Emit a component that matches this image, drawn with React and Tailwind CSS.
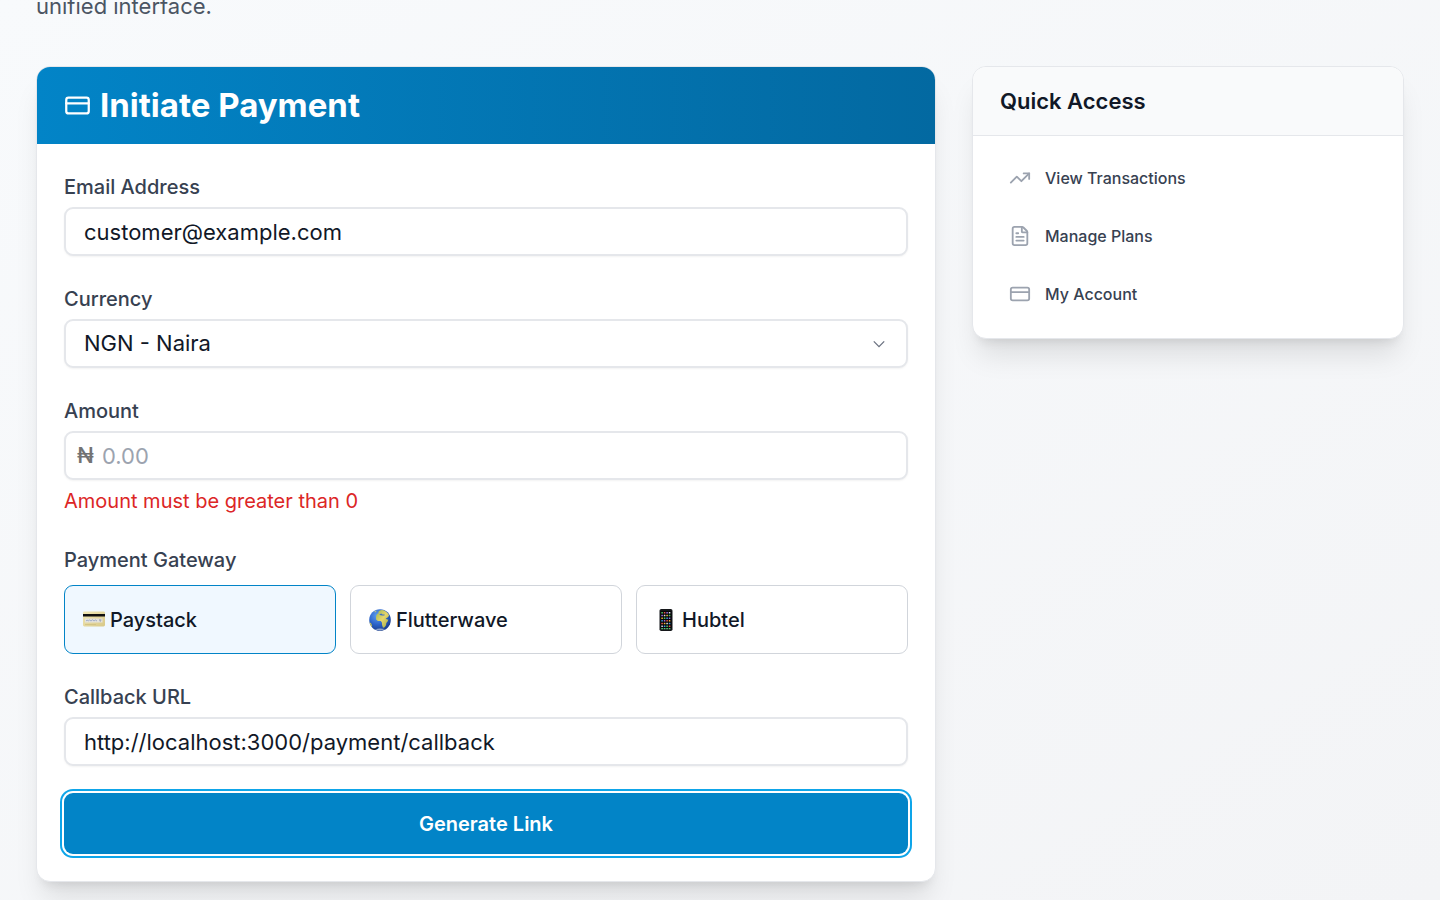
import { useState } from 'react';
import { CreditCard, FileText, TrendingUp } from 'lucide-react';
import clsx from 'clsx';

const CARD =
  'overflow-hidden rounded-[14px] border border-[#e5e7eb] bg-white shadow-[0_22px_28px_-6px_rgb(0_0_0/0.1),0_9px_11px_-7px_rgb(0_0_0/0.1)]';

const FIELD =
  'block h-[49px] w-full rounded-[9px] border-2 border-[#e5e7eb] bg-white px-[18px] text-[22px] text-[#111827] shadow-xs outline-0 placeholder:text-[#9ca3af] focus:border-[#0ea5e9]';

const LABEL = 'block text-[20px] leading-8 font-medium text-[#374151]';

const PaystackIcon = () => (
  <svg viewBox="0 0 22 22" className="size-[22px] shrink-0" aria-hidden="true">
    <defs>
      <linearGradient id="card-face" x1="0" y1="0" x2="1" y2="1">
        <stop offset="0" stopColor="#f1e8b6" />
        <stop offset="1" stopColor="#d8c887" />
      </linearGradient>
    </defs>
    <rect x="0" y="2.500" width="22" height="15" rx="1.400" fill="url(#card-face)" />
    <rect x="0" y="5" width="22" height="2.500" fill="#111111" />
    <rect x="2" y="9.500" width="17.500" height="4" fill="#e4e2dc" />
    <path d="M3 12l1.200-1 1 1 1.400-1 1.400 1 1.600-1.200 1.400 1.200 1.400-1 1.600 1" stroke="#8fa0c4" strokeWidth=".8" fill="none" />
    <path d="M16 11h2.400M16.800 12.100h1" stroke="#7b83a0" strokeWidth=".8" />
    <path d="M2 15.500h11" stroke="#cdbd7c" strokeWidth=".7" />
  </svg>
);

const FlutterwaveIcon = () => (
  <svg viewBox="0 0 22 22" className="size-[22px] shrink-0" aria-hidden="true">
    <defs>
      <radialGradient id="ocean" cx=".38" cy=".3" r=".75">
        <stop offset="0" stopColor="#5fa0f0" />
        <stop offset=".55" stopColor="#2c63c9" />
        <stop offset="1" stopColor="#173a86" />
      </radialGradient>
      <linearGradient id="land" x1="0" y1="0" x2="1" y2="1">
        <stop offset="0" stopColor="#9db552" />
        <stop offset=".5" stopColor="#e6d66c" />
        <stop offset="1" stopColor="#9aa944" />
      </linearGradient>
    </defs>
    <circle cx="11" cy="11" r="10.800" fill="url(#ocean)" />
    <path
      d="M7.400 6.300l1-1.500 1.200-.4-.3-1.400 1.400-1.400 2.200-.6c2.300.3 4.200 1.400 5.700 3l1.500 2.300-.9 1.800-1.500 1-1 .2 1.300 1.300 1.300-.2-.7 2.100-1.300 1.500-.3 2.200-1.400 2-1.600.5-.9-2.600-.2-2.700-1.100-1.400-2.900.1-1.800-1.700-.1-2.300z"
      fill="url(#land)"
    />
    <path d="M10.500 5.200l1.800-.6 1.200.9 2.200.1-.3 1-2.300-.1-2.300-.6z" fill="#3a70c8" />
    <path d="M.5 13.200l1.600 1 .9 2.300-.2 1.500A10.800 10.800 0 0 1 .5 13.200z" fill="#c9c257" />
    <path d="M5.500 2.300l2-.7-.4 1.300-1.400.6z" fill="#b8c58a" />
    <path d="M6 20.200c3.300 1.500 7 1.400 10-.1-2.900-.8-7-.8-10 .1z" fill="#dfe7f2" opacity=".6" />
  </svg>
);

const APP_COLORS = ['#4cc764', '#d9dde2', '#e8574d', '#3f9be8', '#f0b53a', '#9a6be0'];

const HubtelIcon = () => (
  <svg viewBox="0 0 22 22" className="size-[22px] shrink-0" aria-hidden="true">
    <rect x="4.500" y="0" width="13" height="22" rx="1.800" fill="#15171a" />
    <rect x="5.500" y="2" width="11" height="17.500" fill="#050608" />
    {[0, 1, 2, 3, 4, 5].map((row) =>
      [0, 1, 2, 3].map((col) => (
        <rect
          key={`${row}-${col}`}
          x={6.3 + col * 2.5}
          y={3 + row * 2.7}
          width="1.600"
          height="1.500"
          rx=".3"
          fill={APP_COLORS[(row * 5 + col * 2 + (col > 1 ? 1 : 0)) % 6]}
        />
      ))
    )}
    <path d="M6.300 19.600h9.300" stroke="#58c878" strokeWidth="1.200" strokeDasharray="1.600 .9" />
  </svg>
);

const gateways = [
  { id: 'paystack', name: 'Paystack', icon: PaystackIcon },
  { id: 'flutterwave', name: 'Flutterwave', icon: FlutterwaveIcon },
  { id: 'hubtel', name: 'Hubtel', icon: HubtelIcon }
];

const quickLinks = [
  { label: 'View Transactions', href: '#transactions', icon: TrendingUp },
  { label: 'Manage Plans', href: '#plans', icon: FileText },
  { label: 'My Account', href: '#account', icon: CreditCard }
];

const PaymentForm = () => {
  const [formData, setFormData] = useState({
    email: 'customer@example.com',
    currency: 'NGN',
    amount: '',
    gateway: 'paystack',
    callbackUrl: 'http://localhost:3000/payment/callback'
  });

  const setField = (field) => (e) => setFormData(prev => ({ ...prev, [field]: e.target.value }));

  return (
    <section className={clsx(CARD, 'lg:col-span-2')}>
      <div className="flex items-center gap-[9px] bg-linear-to-r from-[#0284c7] to-[#0369a1] px-[27px] py-[18px] text-white">
        <CreditCard className="size-[27px]" />
        <h2 className="text-[33px] leading-[41px] font-bold">Initiate Payment</h2>
      </div>

      <form className="space-y-[27px] p-[27px]" onSubmit={(e) => e.preventDefault()}>
        <div>
          <label htmlFor="email" className={LABEL}>Email Address</label>
          <input id="email" type="email" value={formData.email} onChange={setField('email')} className={clsx(FIELD, 'mt-1')} />
        </div>

        <div>
          <label htmlFor="currency" className={LABEL}>Currency</label>
          <div className="relative mt-1">
            <select id="currency" value={formData.currency} onChange={setField('currency')} className={clsx(FIELD, 'appearance-none')}>
              <option value="NGN">NGN - Naira</option>
              <option value="GHS">GHS - Cedi</option>
              <option value="USD">USD - Dollar</option>
            </select>
            <svg viewBox="0 0 20 20" className="pointer-events-none absolute inset-y-0 right-4 my-auto size-[26px]" fill="none" stroke="#6b7280" strokeWidth="1" aria-hidden="true">
              <path d="M6 8l4 4 4-4" />
            </svg>
          </div>
        </div>

        <div>
          <label htmlFor="amount" className={LABEL}>Amount</label>
          <div className="relative mt-1">
            <span className="pointer-events-none absolute inset-y-0 left-[13px] flex items-center text-[22px] font-medium text-[#737373]">₦</span>
            <input id="amount" type="text" inputMode="decimal" placeholder="0.00" value={formData.amount} onChange={setField('amount')} className={clsx(FIELD, 'pl-9')} />
          </div>
          <p className="mt-[5px] text-[20px] leading-8 text-[#dc2626]">Amount must be greater than 0</p>
        </div>

        <fieldset>
          <legend className={LABEL}>Payment Gateway</legend>
          <div className="mt-[9px] grid grid-cols-3 gap-[14px]">
            {gateways.map(({ id, name, icon: Icon }) => (
              <label
                key={id}
                className={clsx(
                  'flex h-[69px] cursor-pointer items-center gap-[5px] rounded-[9px] border px-[18px] text-[20px] font-medium text-[#111827]',
                  formData.gateway === id ? 'border-[#0284c7] bg-[#f0f8ff]' : 'border-[#d1d5db] bg-white'
                )}
              >
                <input type="radio" name="gateway" value={id} checked={formData.gateway === id} onChange={setField('gateway')} className="sr-only" />
                <Icon />
                {name}
              </label>
            ))}
          </div>
        </fieldset>

        <div>
          <label htmlFor="callback" className={LABEL}>Callback URL</label>
          <input id="callback" type="url" value={formData.callbackUrl} onChange={setField('callbackUrl')} className={clsx(FIELD, 'mt-1')} />
        </div>

        <button type="submit" className="block h-[61px] w-full rounded-[9px] bg-[#0284c7] text-[20px] font-semibold text-white ring-2 ring-[#0ea5e9] ring-offset-2 outline-0">
          Generate Link
        </button>
      </form>
    </section>
  );
};

const QuickAccess = () => (
  <aside className={CARD}>
    <h3 className="border-b border-[#e5e7eb] bg-[#f9fafb] px-[27px] py-[18px] text-[22px] leading-8 font-semibold text-[#111827]">Quick Access</h3>
    <nav className="space-y-[9px] px-[18px] pt-[17px] pb-5">
      {quickLinks.map(({ label, href, icon: Icon }) => (
        <a key={label} href={href} className="flex h-[49px] items-center gap-[14px] rounded-[9px] px-[18px] text-[16px] font-medium text-[#374151]">
          <Icon className="size-[22px] text-[#9ca3af]" />
          {label}
        </a>
      ))}
    </nav>
  </aside>
);

export default function App() {
  return (
    <div className="min-h-screen overflow-hidden bg-linear-to-br from-[#f8fafc] to-[#f3f4f6] px-9 pb-[18px] font-['Inter',sans-serif]">
      <p className="-mt-3 text-[22px] leading-9 text-[#4b5563]">unified interface.</p>
      <main className="mt-[42px] grid grid-cols-1 items-start gap-9 lg:grid-cols-3">
        <PaymentForm />
        <QuickAccess />
      </main>
    </div>
  );
}
